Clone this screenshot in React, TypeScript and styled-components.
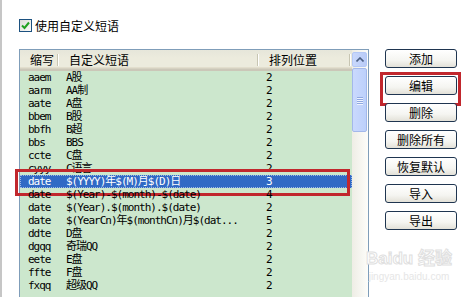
import React from 'react';
import styled, { createGlobalStyle } from 'styled-components';

const GlobalStyle = createGlobalStyle`
  html, body { margin: 0; padding: 0; background: #fff; }
  body { font-family: 'Noto Sans CJK SC', sans-serif; }
`;

const Window = styled.div`
  position: relative;
  display: flex;
  width: 462px;
  height: 297px;
  overflow: hidden;
  box-sizing: border-box;
  background: #fff;
  border-left: 2px solid #c6c6c6;
`;

const LeftPane = styled.div`
  display: flex;
  flex-direction: column;
  padding: 19px 0 0 17px;
`;

const CheckRow = styled.label`
  display: flex;
  align-items: center;
  gap: 3px;
  height: 13px;
  font-size: 12px;
  line-height: 13px;
  color: #000;
`;

const CheckBox = styled.span`
  display: flex;
  align-items: center;
  justify-content: center;
  width: 13px;
  height: 13px;
  box-sizing: border-box;
  border: 1px solid #1c5180;
  background: linear-gradient(135deg, #dcdcd7, #fbfbf9);
`;

const Table = styled.div`
  display: grid;
  grid-template-columns: 332px 16px;
  width: 350px;
  height: 260px;
  margin-top: 17px;
  box-sizing: border-box;
  border: 1px solid #7f9db9;
  border-bottom: none;
`;

const List = styled.div`
  display: flex;
  flex-direction: column;
  background: #cce7cd;
`;

const Header = styled.div`
  display: grid;
  grid-template-columns: 38px 200px 92px 2px;
  height: 21px;
  background: linear-gradient(
    to bottom,
    #e6e6da 0,
    #ecebdd 8px,
    #ecebdd 17px,
    #e2decd 17px,
    #e2decd 18px,
    #d6d2c2 18px,
    #d6d2c2 19px,
    #cbc7b8 19px
  );
`;

const HeadCell = styled.div`
  position: relative;
  padding-left: ${p => p.$pad ?? 11}px;
  font-size: 12px;
  line-height: 19px;
  color: #000;
  white-space: nowrap;
  &::after {
    content: '';
    position: absolute;
    right: 0;
    top: 4px;
    bottom: 5px;
    width: 1px;
    background: #c7c5b2;
    box-shadow: 1px 0 0 #fff;
  }
`;

const Row = styled.div`
  position: relative;
  display: grid;
  grid-template-columns: 38px 200px 1fr;
  height: 13px;
  line-height: 13px;
  font-family: 'DejaVu Sans Mono', 'Noto Sans CJK SC', monospace;
  font-size: 11px;
  letter-spacing: -1px;
  color: ${p => (p.$selected ? '#fff' : '#000')};
  background: ${p => (p.$selected ? '#316ac5' : 'transparent')};
  outline: ${p => (p.$selected ? '1px dotted #9fb8e6' : 'none')};
  outline-offset: -1px;
  &::after {
    content: '';
    display: ${p => (p.$marked ? 'block' : 'none')};
    position: absolute;
    left: -5px;
    right: 2px;
    top: -6px;
    bottom: -8px;
    border: 3px solid #c1272d;
    pointer-events: none;
  }
`;

const Cell = styled.div`
  padding-left: 8px;
  white-space: nowrap;
  overflow: hidden;
`;

const ScrollBar = styled.div`
  display: flex;
  flex-direction: column;
  gap: 1px;
  padding: 2px 1px 0 0;
  background: linear-gradient(to right, #eeede5, #fdfdfa);
`;

const ScrollButton = styled.div`
  display: flex;
  align-items: center;
  justify-content: center;
  height: 15px;
  box-sizing: border-box;
  border: 1px solid #b4c8f6;
  border-radius: 2px;
  background: linear-gradient(to right, #c9d8fc, #b9cbf7);
`;

const Thumb = styled.div`
  display: flex;
  flex-direction: column;
  align-items: center;
  justify-content: center;
  gap: 1px;
  height: 64px;
  box-sizing: border-box;
  border: 1px solid #a3b8ea;
  border-radius: 2px;
  background: linear-gradient(to right, #cad9fd, #bcd0fb);
`;

const Grip = styled.span`
  width: 6px;
  height: 1px;
  background: #8fa8e0;
  box-shadow: 0 1px 0 #eef3ff;
`;

const RightPane = styled.div`
  display: flex;
  flex-direction: column;
  gap: 8px;
  padding: 49px 0 0 16px;
`;

const Button = styled.button`
  position: relative;
  width: 72px;
  height: 19px;
  padding: 0;
  box-sizing: border-box;
  border: 1px solid #1f3550;
  border-radius: 3px;
  background: linear-gradient(to bottom, #ffffff 0%, #f5f5f1 60%, #e3e1d8 100%);
  font-family: 'Noto Sans CJK SC', sans-serif;
  font-size: 12px;
  line-height: 17px;
  color: #000;
  &::after {
    content: '';
    display: ${p => (p.$marked ? 'block' : 'none')};
    position: absolute;
    left: -6px;
    right: -5px;
    top: -5px;
    bottom: -12px;
    border: 3px solid #c1272d;
    pointer-events: none;
  }
`;

const Watermark = styled.div`
  position: absolute;
  left: 364px;
  top: 248px;
  display: flex;
  flex-direction: column;
  align-items: center;
  white-space: nowrap;
  color: #e6e6e6;
  pointer-events: none;
`;

const MarkTitle = styled.span`
  font-family: 'Liberation Sans', 'Noto Sans CJK SC', sans-serif;
  font-size: 17px;
  font-weight: bold;
  line-height: 22px;
  color: #fff;
  -webkit-text-stroke: 1px #e0e0e0;
`;

const MarkUrl = styled.span`
  font-family: 'Liberation Sans', sans-serif;
  font-size: 10px;
  line-height: 14px;
`;

type Item = { abbr: string; text: string; pos: string; selected?: boolean };

const items: Item[] = [
  { abbr: 'aaem', text: 'A股', pos: '2' },
  { abbr: 'aarm', text: 'AA制', pos: '2' },
  { abbr: 'aate', text: 'A盘', pos: '2' },
  { abbr: 'bbem', text: 'B股', pos: '2' },
  { abbr: 'bbfh', text: 'B超', pos: '2' },
  { abbr: 'bbs', text: 'BBS', pos: '2' },
  { abbr: 'ccte', text: 'C盘', pos: '2' },
  { abbr: 'cyyy', text: 'C语言', pos: '2' },
  { abbr: 'date', text: '$(YYYY)年$(M)月$(D)日', pos: '3', selected: true },
  { abbr: 'date', text: '$(Year)-$(month)-$(date)', pos: '4' },
  { abbr: 'date', text: '$(Year).$(month).$(date)', pos: '2' },
  { abbr: 'date', text: '$(YearCn)年$(monthCn)月$(dat...', pos: '5' },
  { abbr: 'ddte', text: 'D盘', pos: '2' },
  { abbr: 'dgqq', text: '奇瑞QQ', pos: '2' },
  { abbr: 'eete', text: 'E盘', pos: '2' },
  { abbr: 'ffte', text: 'F盘', pos: '2' },
  { abbr: 'fxqq', text: '超级QQ', pos: '2' },
];

const buttons = ['添加', '编辑', '删除', '删除所有', '恢复默认', '导入', '导出'];

const App = () => (
  <>
    <GlobalStyle />
    <Window>
      <LeftPane>
        <CheckRow>
          <CheckBox>
            <svg width="9" height="9" viewBox="0 0 9 9">
              <path d="M1 4.5 L3.5 7 L8 1.5" fill="none" stroke="#21a121" strokeWidth="2" />
            </svg>
          </CheckBox>
          使用自定义短语
        </CheckRow>
        <Table>
          <List>
            <Header>
              <HeadCell $pad={10}>缩写</HeadCell>
              <HeadCell>自定义短语</HeadCell>
              <HeadCell>排列位置</HeadCell>
              <div />
            </Header>
            {items.map((it, i) => (
              <Row key={i} $selected={it.selected} $marked={it.selected}>
                <Cell>{it.abbr}</Cell>
                <Cell>{it.text}</Cell>
                <Cell>{it.pos}</Cell>
              </Row>
            ))}
          </List>
          <ScrollBar>
            <ScrollButton>
              <svg width="8" height="5" viewBox="0 0 8 5">
                <path d="M0.5 4.5 L4 1 L7.5 4.5" fill="none" stroke="#4d6185" strokeWidth="1.6" />
              </svg>
            </ScrollButton>
            <Thumb>
              <Grip />
              <Grip />
              <Grip />
              <Grip />
            </Thumb>
          </ScrollBar>
        </Table>
      </LeftPane>
      <RightPane>
        {buttons.map(b => (
          <Button key={b} $marked={b === '编辑'}>
            {b}
          </Button>
        ))}
      </RightPane>
      <Watermark>
        <MarkTitle>Baidu 经验</MarkTitle>
        <MarkUrl>jingyan.baidu.com</MarkUrl>
      </Watermark>
    </Window>
  </>
);

export default App;
